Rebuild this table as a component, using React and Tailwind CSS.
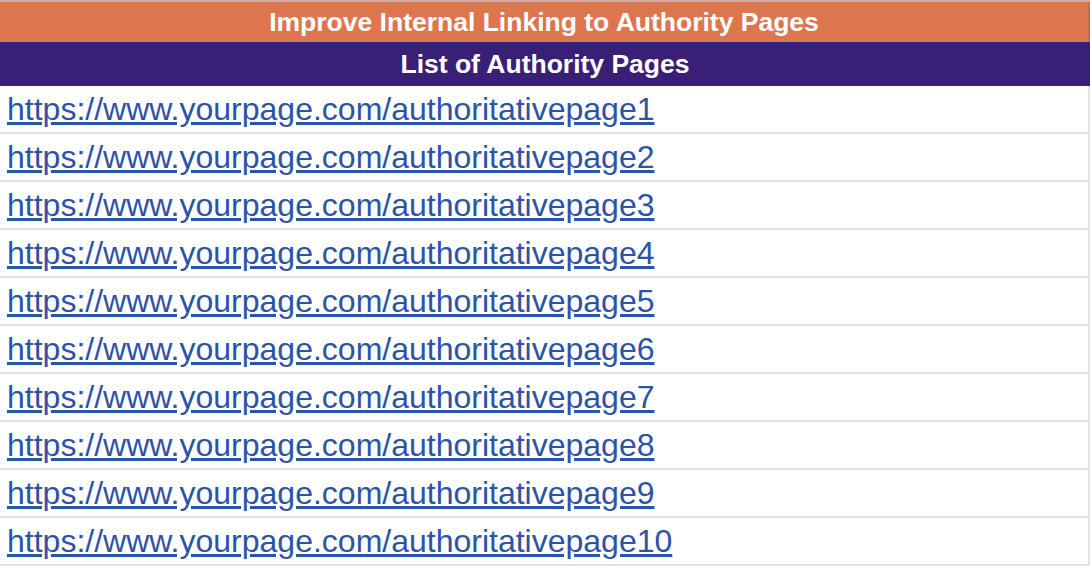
import React from 'react';

const pages = Array.from({ length: 10 }, (_, i) => `https://www.yourpage.com/authoritativepage${i + 1}`);

const App = () => {
  return (
    <div className="w-[1090px] h-[566px] overflow-hidden bg-white font-['Liberation_Sans',Arial,sans-serif]">
      <div className="h-[2px] bg-[#cfae9f]" />
      {/* Sheet title */}
      <div className="h-[40px] bg-[#dd764f] border-r-2 border-[#c96a47] flex items-center justify-center">
        <h1 className="text-[26.5px] font-bold text-white leading-none pt-[1px]">Improve Internal Linking to Authority Pages</h1>
      </div>
      <div className="h-[44px] bg-[#3a1f76] flex items-center justify-center">
        <h2 className="text-[26.5px] font-bold text-white leading-none">List of Authority Pages</h2>
      </div>
      {/* Rows */}
      <div className="flex flex-col">
        {pages.map((url) => (
          <div key={url} className="h-[48px] border-b-2 border-r-2 border-[#e2e2e2] flex items-center px-[7px]">
            <a href="#" className="text-[32px] text-[#2b53a6] underline leading-none">{url}</a>
          </div>
        ))}
      </div>
    </div>
  );
};

export default App;
